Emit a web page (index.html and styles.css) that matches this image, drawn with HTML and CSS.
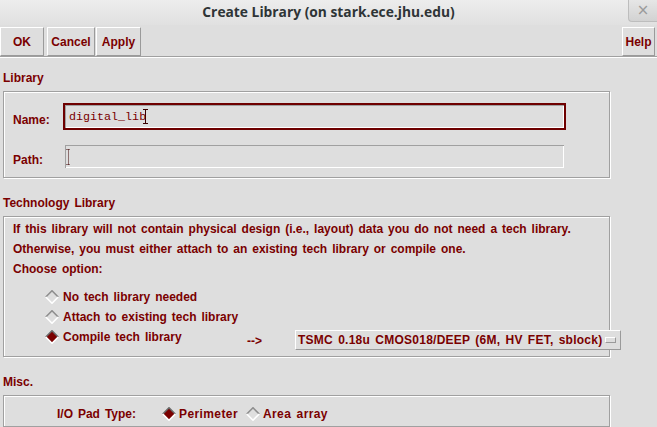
FILE: index.html
```html
<!DOCTYPE html>
<html>
<head>
<meta charset="utf-8">
<title>Create Library</title>
<link rel="stylesheet" href="styles.css">
</head>
<body>
<div class="window">
  <div class="titlebar">
    <span class="tb-spacer"></span>
    <span class="title">Create Library (on stark.ece.jhu.edu)</span>
    <span class="close">×</span>
  </div>
  <div class="toolbar">
    <button class="btn btn-ok">OK</button>
    <button class="btn btn-cancel">Cancel</button>
    <button class="btn btn-apply">Apply</button>
    <span class="fill"></span>
    <button class="btn btn-help">Help</button>
  </div>
  <div class="sep"></div>
  <div class="content">
    <div class="section-label first">Library</div>
    <div class="frame lib">
      <div class="field-label">Name:</div>
      <div class="entry focused"><span class="entry-text">digital_lib</span><svg class="ibeam" width="5" height="15" viewBox="0 0 5 15"><path d="M0 0.5H5M2.5 0.5V14.5M0 14.5H5" stroke="#3a0000" stroke-width="1" fill="none"/></svg></div>
      <div class="field-label">Path:</div>
      <div class="entry"><svg class="ibeam dotted" width="5" height="16" viewBox="0 0 5 16"><path d="M0.5 0.5H4.5M2.5 0.5V15.5M0.5 15.5H4.5" stroke="#3a0000" stroke-width="1" stroke-dasharray="1 1" fill="none"/></svg></div>
    </div>

    <div class="section-label">Technology Library</div>
    <div class="frame tech">
      <div class="line">If this library will not contain physical design (i.e., layout) data you do not need a tech library.</div>
      <div class="line">Otherwise, you must either attach to an existing tech library or compile one.</div>
      <div class="line">Choose option:</div>
      <div class="options">
        <div class="opt">
          <svg class="diamond" width="14" height="14" viewBox="0 0 14 14"><path d="M0.8 7L7 0.8L13.2 7" stroke="#8e8e8e" stroke-width="1.6" fill="none"/><path d="M0.8 7L7 13.2L13.2 7" stroke="#ffffff" stroke-width="1.6" fill="none"/></svg>
          <span class="opt-text">No tech library needed</span>
        </div>
        <div class="opt">
          <svg class="diamond" width="14" height="14" viewBox="0 0 14 14"><path d="M0.8 7L7 0.8L13.2 7" stroke="#8e8e8e" stroke-width="1.6" fill="none"/><path d="M0.8 7L7 13.2L13.2 7" stroke="#ffffff" stroke-width="1.6" fill="none"/></svg>
          <span class="opt-text">Attach to existing tech library</span>
        </div>
        <div class="opt">
          <svg class="diamond" width="14" height="14" viewBox="0 0 14 14"><path d="M7 1L13 7L7 13L1 7Z" fill="#7a0000"/><path d="M0.8 7L7 0.8L13.2 7" stroke="#6a6a6a" stroke-width="1.6" fill="none"/><path d="M0.8 7L7 13.2L13.2 7" stroke="#ffffff" stroke-width="1.6" fill="none"/></svg>
          <span class="opt-text wide">Compile tech library</span>
          <span class="arrow">--&gt;</span>
          <div class="menubutton"><span class="mb-text">TSMC 0.18u CMOS018/DEEP (6M, HV FET, sblock)</span><span class="indicator"></span></div>
        </div>
      </div>
    </div>

    <div class="section-label">Misc.</div>
    <div class="frame misc">
      <div class="misc-row">
        <span class="misc-label">I/O Pad Type:</span>
        <svg class="diamond" width="14" height="14" viewBox="0 0 14 14"><path d="M7 1L13 7L7 13L1 7Z" fill="#7a0000"/><path d="M0.8 7L7 0.8L13.2 7" stroke="#6a6a6a" stroke-width="1.6" fill="none"/><path d="M0.8 7L7 13.2L13.2 7" stroke="#ffffff" stroke-width="1.6" fill="none"/></svg>
        <span class="misc-opt">Perimeter</span>
        <svg class="diamond" width="14" height="14" viewBox="0 0 14 14"><path d="M0.8 7L7 0.8L13.2 7" stroke="#8e8e8e" stroke-width="1.6" fill="none"/><path d="M0.8 7L7 13.2L13.2 7" stroke="#ffffff" stroke-width="1.6" fill="none"/></svg>
        <span class="misc-opt">Area array</span>
      </div>
    </div>
  </div>
</div>
</body>
</html>
```

FILE: styles.css
```css
* { box-sizing: border-box; }
html, body {
  margin: 0;
  padding: 0;
  background: #dedede;
}
body {
  width: 657px;
  height: 427px;
  overflow: hidden;
  font-family: "Liberation Sans", Arial, sans-serif;
  font-weight: bold;
  font-size: 12px;
  word-spacing: 1.6px;
  color: #7a0000;
}
.window {
  width: 657px;
  height: 427px;
  overflow: hidden;
  display: flex;
  flex-direction: column;
}
.titlebar {
  height: 25px;
  flex: none;
  display: grid;
  grid-template-columns: 1fr auto 1fr;
  background: linear-gradient(#ededed, #e0e0e0);
}
.title {
  font-family: "Open Sans", "DejaVu Sans", sans-serif;
  font-weight: bold;
  font-size: 13.8px;
  word-spacing: 0;
  color: #2e3436;
  line-height: 23px;
  white-space: nowrap;
}
.close {
  justify-self: end;
  align-self: start;
  width: 29px;
  height: 22px;
  border-left: 1px solid #bdbdbd;
  border-bottom: 1px solid #bdbdbd;
  border-bottom-left-radius: 4px;
  background: linear-gradient(#e6e6e6, #d2d2d2);
  color: #9a9a9a;
  font-family: "DejaVu Sans", sans-serif;
  font-size: 15px;
  font-weight: normal;
  line-height: 20px;
  text-align: center;
}
.toolbar {
  height: 31px;
  flex: none;
  display: flex;
  align-items: flex-start;
  padding-top: 2px;
  padding-right: 2px;
}
.fill { flex: 1; }
.btn {
  font: inherit;
  color: inherit;
  height: 29px;
  margin: 0;
  padding: 0;
  background: #dedede;
  border: 1px solid;
  border-color: #ffffff #9a9a9a #9a9a9a #ffffff;
  text-align: center;
}
.btn-ok { width: 44px; }
.btn-cancel { width: 48px; margin-left: 3px; }
.btn-apply { width: 45px; margin-left: 1px; }
.btn-help { width: 33px; }
.sep {
  height: 2px;
  flex: none;
  border-top: 1px solid #a0a0a0;
  border-bottom: 1px solid #ffffff;
}
.content {
  padding-left: 3px;
  flex: 1;
  min-height: 0;
}
.section-label {
  line-height: 20px;
  margin-top: 15px;
  margin-bottom: 3px;
}
.section-label.first { margin-top: 10px; }
.frame {
  width: 607px;
  border: 1px solid #a0a0a0;
  box-shadow: 1px 1px 0 #ffffff, inset 1px 1px 0 #ffffff;
  padding-left: 9px;
}
.lib {
  height: 87px;
  padding-top: 11px;
  display: grid;
  grid-template-columns: 50px 503px;
  grid-template-rows: 27px 27px;
  row-gap: 13px;
}
.field-label {
  line-height: 20px;
  align-self: end;
}
.entry {
  height: 27px;
  border: 2px solid #dedede;
  box-shadow: inset 1px 1px 0 #a0a0a0, inset -1px -1px 0 #ffffff;
  display: flex;
  align-items: center;
  padding-left: 4px;
}
.entry.focused {
  border-color: #6e0000;
}
.entry-text {
  font-family: "Liberation Mono", "Courier New", monospace;
  font-weight: normal;
  font-size: 11.7px;
  word-spacing: 0;
  color: #7a0000;
}
.ibeam { margin-left: -3px; }
.ibeam.dotted { margin-left: -3px; }
.tech {
  height: 141px;
  padding-top: 2px;
}
.line { line-height: 20px; white-space: nowrap; }
.options {
  margin-top: 8px;
  padding-left: 32px;
}
.opt {
  height: 20px;
  display: flex;
  align-items: flex-start;
}
.opt > * { flex: none; }
.diamond {
  flex: none;
  margin-top: 3px;
}
.opt-text {
  margin-left: 4px;
  line-height: 20px;
  white-space: nowrap;
}
.opt-text.wide { width: 184px; }
.arrow {
  width: 48px;
  line-height: 20px;
  padding-top: 4px;
}
.menubutton {
  margin-top: 3px;
  height: 20px;
  width: 326px;
  display: flex;
  align-items: center;
  padding-left: 2px;
  border: 1px solid;
  border-color: #ffffff #9a9a9a #9a9a9a #ffffff;
  background: #dedede;
  white-space: nowrap;
}
.mb-text {
  letter-spacing: 0.25px;
}
.indicator {
  flex: none;
  width: 11px;
  height: 6px;
  margin-left: 3px;
  border: 1px solid;
  border-color: #ffffff #9a9a9a #9a9a9a #ffffff;
}
.misc {
  height: 32px;
  padding-top: 8px;
}
.misc-row {
  display: flex;
  align-items: flex-start;
  padding-left: 44px;
  line-height: 20px;
}
.misc-row > * { flex: none; }
.misc-label { width: 105px; }
.misc-row .diamond { margin-top: 3px; }
.misc-opt { margin-left: 3px; margin-right: 8px; white-space: nowrap; letter-spacing: 0.4px; }
```
